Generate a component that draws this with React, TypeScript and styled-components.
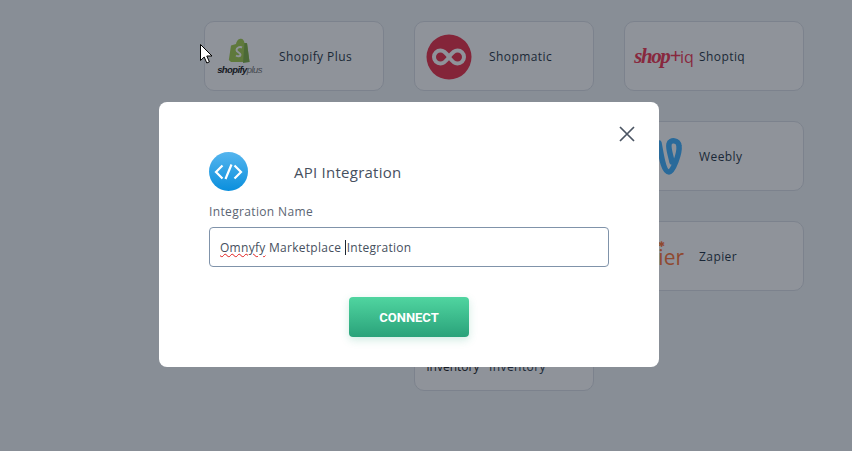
import React from 'react'
import styled, { createGlobalStyle } from 'styled-components'

const GlobalStyle = createGlobalStyle`
  html, body {
    margin: 0;
    padding: 0;
    height: 100%;
    overflow: hidden;
    background: #fff;
  }
`

const Page = styled.div`
  width: 852px;
  height: 451px;
  box-sizing: border-box;
  padding: 21px 0 0 204px;
  background: #f0f4f6;
  font-family: 'Open Sans', sans-serif;
`

const Grid = styled.div`
  display: grid;
  grid-template-columns: repeat(3, 180px);
  grid-auto-rows: 70px;
  gap: 30px;
`

const Card = styled.div<{ $col?: number; $drop?: number }>`
  box-sizing: border-box;
  display: flex;
  align-items: center;
  border: 1px solid #d8dce4;
  border-radius: 10px;
  background: #fff;
  padding-top: ${(p) => p.$drop ?? 1}px;
  ${(p) => (p.$col ? `grid-column: ${p.$col};` : '')}
`

const LogoSlot = styled.div`
  width: 74px;
  height: 100%;
  flex: none;
  display: flex;
  align-items: center;
  justify-content: center;
`

const CardName = styled.span`
  font-size: 12px;
  letter-spacing: 0.42px;
  color: #0c1c30;
  white-space: nowrap;
`

const ShopifyLogo = styled.div`
  display: flex;
  flex-direction: column;
  align-items: center;
  margin: 0 0 0 -5px;
`

const ShopifyWord = styled.span`
  font-family: 'Liberation Sans', sans-serif;
  font-size: 9.5px;
  line-height: 12px;
  font-style: italic;
  font-weight: 700;
  letter-spacing: -0.6px;
  color: #000;
  white-space: nowrap;
  & > i {
    font-weight: 400;
    color: #666;
  }
`

const ShopmaticMark = styled.svg`
  margin-left: -7px;
`

const ShoptiqLogo = styled.span`
  font-family: 'Liberation Serif', serif;
  font-style: italic;
  font-weight: 700;
  font-size: 21px;
  letter-spacing: -1.4px;
  color: #f02040;
  white-space: nowrap;
  margin-left: 4px;
  & > b {
    font-family: 'Open Sans', sans-serif;
    font-style: normal;
    font-weight: 400;
    font-size: 16px;
    letter-spacing: 0;
  }
`

const ZapierLogo = styled.span`
  position: relative;
  font-family: 'Open Sans', sans-serif;
  font-size: 21px;
  font-weight: 500;
  color: #ff6420;
  margin-left: -16px;
  &::after {
    content: '✱';
    position: absolute;
    right: 19px;
    top: -3px;
    font-family: 'DejaVu Sans', sans-serif;
    font-size: 8px;
  }
`

const InflowLogo = styled.span`
  font-size: 12px;
  color: #000;
  white-space: nowrap;
  margin-left: 2px;
`

const Overlay = styled.div`
  position: fixed;
  inset: 0;
  padding: 102px 0 0 159px;
  background: rgba(40, 48, 62, 0.52);
`

const Modal = styled.div`
  position: relative;
  box-sizing: border-box;
  width: 500px;
  height: 265px;
  padding: 50px 50px 0;
  background: #fff;
  border-radius: 8px;
  font-family: 'Open Sans', sans-serif;
`

const CloseButton = styled.div`
  position: absolute;
  top: 24px;
  right: 24px;
  width: 16px;
  height: 16px;
  display: flex;
`

const ModalHeader = styled.div`
  display: flex;
  align-items: flex-start;
  gap: 46px;
  height: 40px;
`

const ModalTitle = styled.h2`
  margin: 10px 0 0;
  font-size: 15px;
  line-height: 20px;
  font-weight: 400;
  letter-spacing: 0.25px;
  color: #46505e;
`

const FieldLabel = styled.label`
  display: block;
  margin-top: 11px;
  height: 17px;
  line-height: 17px;
  font-size: 12px;
  letter-spacing: 0.35px;
  color: #5b6573;
`

const FieldBox = styled.div`
  box-sizing: border-box;
  display: flex;
  align-items: center;
  height: 40px;
  width: 400px;
  margin-top: 7px;
  padding: 0 10px;
  border: 1px solid #8093aa;
  border-radius: 4px;
  font-size: 12px;
  letter-spacing: 0.28px;
  color: #46505e;
  white-space: pre;
`

const Misspelled = styled.span`
  text-decoration: underline wavy #e02020 1px;
  text-underline-offset: 1px;
`

const Caret = styled.span`
  display: inline-block;
  width: 1px;
  height: 15px;
  background: #1d2733;
  margin-right: 1px;
`

const ButtonRow = styled.div`
  display: flex;
  justify-content: center;
  margin-top: 30px;
`

const ConnectButton = styled.button`
  width: 120px;
  height: 40px;
  border: 0;
  border-radius: 4px;
  background: linear-gradient(180deg, #50d5a0 0%, #2aa27a 100%);
  box-shadow: 0 3px 8px rgba(42, 162, 122, 0.22);
  color: #fff;
  font-family: Roboto, sans-serif;
  font-size: 13px;
  font-weight: 700;
`

const Pointer = styled.svg`
  position: fixed;
  left: 200px;
  top: 44px;
`

const App: React.FunctionComponent = () => {
  return (
    <>
      <GlobalStyle />
      <Page>
        <Grid>
          <Card>
            <LogoSlot>
              <ShopifyLogo>
                <svg width="26" height="26" viewBox="0 0 26 26">
                  <path d="M4 7.5 9 6C10 2 12 .8 14 .8S17 2.5 17.5 5L20 5.2 22.5 24 4 24 1.8 22Z" fill="#9cc83c" />
                  <path d="M20 5.2 22.5 24 16 25 17.5 5Z" fill="#72a830" />
                  <path d="M15 9.5C13 8.5 9.5 9.3 9.5 12C9.5 14.5 13.5 14.5 13.5 16.8C13.5 18.5 11 18.7 9 17.5" fill="none" stroke="#fff" strokeWidth="2" />
                </svg>
                <ShopifyWord>
                  shopify<i>plus</i>
                </ShopifyWord>
              </ShopifyLogo>
            </LogoSlot>
            <CardName>Shopify Plus</CardName>
          </Card>
          <Card>
            <LogoSlot>
              <ShopmaticMark width="46" height="46" viewBox="0 0 46 46">
                <circle cx="23" cy="23" r="22.5" fill="#e91936" />
                <path
                  d="M23 23C20 18.5 17.5 16.5 14.5 16.5A6.5 6.5 0 0 0 14.5 29.5C17.5 29.5 20 27.5 23 23C26 18.5 28.5 16.5 31.5 16.5A6.5 6.5 0 0 1 31.5 29.5C28.5 29.5 26 27.5 23 23Z"
                  fill="none"
                  stroke="#fff"
                  strokeWidth="4"
                />
              </ShopmaticMark>
            </LogoSlot>
            <CardName>Shopmatic</CardName>
          </Card>
          <Card>
            <LogoSlot>
              <ShoptiqLogo>
                shop+<b>iq</b>
              </ShoptiqLogo>
            </LogoSlot>
            <CardName>Shoptiq</CardName>
          </Card>
          <Card />
          <Card />
          <Card>
            <LogoSlot>
              <svg width="73" height="67" viewBox="0 0 73 67">
                <path
                  d="M33 20C35 30 37 49 43 49C47 49 54 30 53 23C53 17 44 16 43 21C42 26 45 33 46 39"
                  fill="none"
                  stroke="#2caaff"
                  strokeWidth="5.5"
                  strokeLinecap="round"
                />
              </svg>
            </LogoSlot>
            <CardName>Weebly</CardName>
          </Card>
          <Card />
          <Card />
          <Card>
            <LogoSlot>
              <ZapierLogo>zapier</ZapierLogo>
            </LogoSlot>
            <CardName>Zapier</CardName>
          </Card>
          <Card $col={2} $drop={20}>
            <LogoSlot>
              <InflowLogo>inventory</InflowLogo>
            </LogoSlot>
            <CardName>Inventory</CardName>
          </Card>
        </Grid>
      </Page>
      <Overlay>
        <Modal>
          <CloseButton>
            <svg width="16" height="16" viewBox="0 0 16 16">
              <path d="M1 1 15 15M15 1 1 15" stroke="#4b5563" strokeWidth="1.7" fill="none" />
            </svg>
          </CloseButton>
          <ModalHeader>
            <svg width="39" height="39" viewBox="0 0 39 39">
              <defs>
                <linearGradient id="apiBlue" x1="0" y1="0" x2="0" y2="1">
                  <stop offset="0" stopColor="#55b5ee" />
                  <stop offset="1" stopColor="#0a8fdd" />
                </linearGradient>
              </defs>
              <circle cx="19.5" cy="19.5" r="19.5" fill="url(#apiBlue)" />
              <path d="M13.5 13.5 7 20 13.5 26.5M25.5 13.5 32 20 25.5 26.5M22.5 12.5 16.5 27" fill="none" stroke="#fff" strokeWidth="2.2" />
            </svg>
            <ModalTitle>API Integration</ModalTitle>
          </ModalHeader>
          <FieldLabel>Integration Name</FieldLabel>
          <FieldBox>
            <Misspelled>Omnyfy</Misspelled> Marketplace <Caret />Integration
          </FieldBox>
          <ButtonRow>
            <ConnectButton>CONNECT</ConnectButton>
          </ButtonRow>
        </Modal>
      </Overlay>
      <Pointer width="14" height="20" viewBox="0 0 14 20">
        <path d="M.5.5V16.5L4.2 13 6.8 19 9.4 17.9 6.8 12H12Z" fill="#fff" stroke="#000" strokeWidth="1" />
      </Pointer>
    </>
  )
}

export default App
